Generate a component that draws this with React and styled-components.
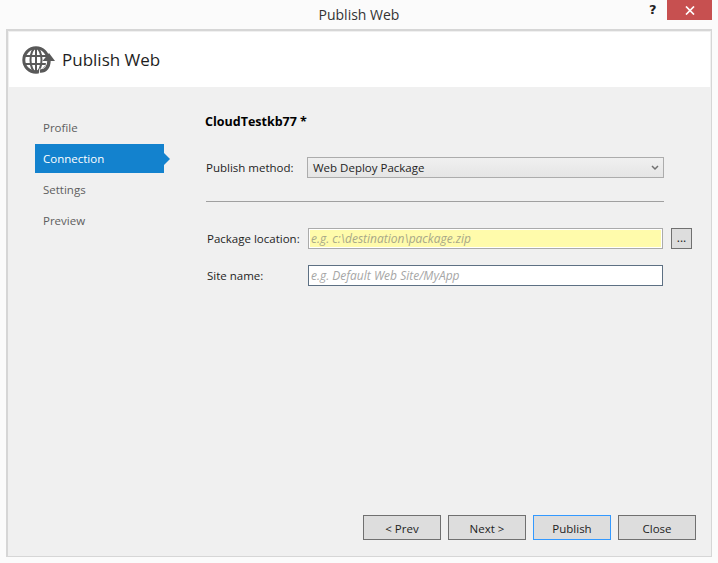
import React from "react";
import styled, { createGlobalStyle } from "styled-components";

const GlobalStyle = createGlobalStyle`
  html, body {
    margin: 0;
    padding: 0;
    background: #fbfbfb;
  }
  body {
    font-family: "Open Sans", "Noto Sans", "Liberation Sans", sans-serif;
    font-size: 11.5px;
    color: #1e1e1e;
  }
`;

const steps = ["Profile", "Connection", "Settings", "Preview"];

const GlobeIcon = () => (
  <svg width="33" height="28" viewBox="0 0 33 28" fill="none" stroke="#595959">
    <circle cx="14" cy="14" r="12.2" strokeWidth="3" />
    <ellipse cx="14" cy="14" rx="5.5" ry="12" strokeWidth="2" />
    <path d="M14 2v24M2.5 10h23M2.5 18h23" strokeWidth="2" />
    <path d="M17 26c7 1 11-4 10.5-11" stroke="#fff" strokeWidth="7" />
    <path d="M18 25c5.5.5 9-4 9-10.5" strokeWidth="3.4" />
    <path d="M20.5 15l6.5-8 6 8z" fill="#595959" stroke="none" />
  </svg>
);

const App = () => {
  return (
    <Window>
      <GlobalStyle />
      <TitleBar>
        <TitleText>Publish Web</TitleText>
        <HelpMark>?</HelpMark>
        <CloseBox>
          <svg width="10" height="9" viewBox="0 0 10 9" stroke="#fff" strokeWidth="1.7">
            <path d="M1 .5l8 8M9 .5l-8 8" />
          </svg>
        </CloseBox>
      </TitleBar>
      <Frame>
        <Header>
          <GlobeIcon />
          <HeaderTitle>Publish Web</HeaderTitle>
        </Header>
        <Body>
          <Sidebar>
            {steps.map((step) => (
              <Step key={step} $active={step === "Connection"}>
                {step}
              </Step>
            ))}
          </Sidebar>
          <Main>
            <Heading>CloudTestkb77 *</Heading>
            <MethodRow>
              <Label $width={101}>Publish method:</Label>
              <Select>
                <span>Web Deploy Package</span>
                <svg width="8" height="6" viewBox="0 0 8 6" fill="none" stroke="#707070" strokeWidth="1.5">
                  <path d="M1 1l3 3 3-3" />
                </svg>
              </Select>
            </MethodRow>
            <Divider />
            <FieldRow $top={26}>
              <Label $width={101} $indent={1}>Package location:</Label>
              <Field $required>e.g. c:\destination\package.zip</Field>
              <BrowseButton>...</BrowseButton>
            </FieldRow>
            <FieldRow $top={16}>
              <Label $width={101} $indent={1}>Site name:</Label>
              <Field>e.g. Default Web Site/MyApp</Field>
            </FieldRow>
            <Footer>
              <Button>&lt; Prev</Button>
              <Button>Next &gt;</Button>
              <Button $primary>Publish</Button>
              <Button>Close</Button>
            </Footer>
          </Main>
        </Body>
      </Frame>
    </Window>
  );
};

const Window = styled.div`
  width: 718px;
  height: 563px;
  overflow: hidden;
  background: #fbfbfb;
`;

const TitleBar = styled.div`
  position: relative;
  height: 29px;
  display: flex;
  align-items: center;
  justify-content: center;
`;

const TitleText = styled.div`
  font-size: 14px;
  color: #333;
`;

const HelpMark = styled.div`
  position: absolute;
  left: 649px;
  top: 0;
  font-family: "DejaVu Sans", sans-serif;
  font-size: 13px;
  font-weight: bold;
  line-height: 20px;
  color: #222;
`;

const CloseBox = styled.div`
  position: absolute;
  left: 667px;
  top: 0;
  width: 45px;
  height: 20px;
  background: #c75050;
  display: flex;
  align-items: center;
  justify-content: center;
`;

const Frame = styled.div`
  box-sizing: border-box;
  width: 706px;
  height: 528px;
  margin-left: 6px;
  padding: 1px;
  border: 2px solid #d6d6d6;
  border-bottom-width: 1px;
  border-right-width: 1px;
  background: #f0f0f0;
  display: flex;
  flex-direction: column;
`;

const Header = styled.div`
  height: 55px;
  flex: none;
  background: #fff;
  display: flex;
  align-items: center;
  padding-left: 13px;
  gap: 7px;
`;

const HeaderTitle = styled.div`
  font-size: 17px;
  color: #1e1e1e;
`;

const Body = styled.div`
  flex: 1;
  display: flex;
  min-height: 0;
`;

const Sidebar = styled.div`
  width: 129px;
  flex: none;
  margin-left: 26px;
  padding-top: 26px;
  display: flex;
  flex-direction: column;
  gap: 2px;
`;

const Step = styled.div`
  position: relative;
  height: 29px;
  line-height: 29px;
  padding-left: 8px;
  font-size: 11.5px;
  color: ${(p) => (p.$active ? "#fff" : "#5e5e5e")};
  background: ${(p) => (p.$active ? "#1382ce" : "transparent")};

  ${(p) =>
    p.$active &&
    `&::after {
      content: "";
      position: absolute;
      left: 100%;
      top: 9px;
      border-left: 6px solid #1382ce;
      border-top: 6px solid transparent;
      border-bottom: 6px solid transparent;
    }`}
`;

const Main = styled.div`
  flex: 1;
  margin-left: 41px;
  padding-top: 25px;
  display: flex;
  flex-direction: column;
  min-width: 0;
`;

const Heading = styled.div`
  font-size: 12.5px;
  font-weight: 700;
  line-height: 19px;
  color: #000;
`;

const MethodRow = styled.div`
  display: flex;
  align-items: center;
  margin: 26px 0 0 1px;
`;

const Label = styled.div`
  box-sizing: border-box;
  width: ${(p) => p.$width + (p.$indent || 0)}px;
  padding-left: ${(p) => p.$indent || 0}px;
  font-size: 11.5px;
  color: #1e1e1e;
  white-space: nowrap;
`;

const Select = styled.div`
  box-sizing: border-box;
  width: 357px;
  height: 21px;
  padding: 0 4px 0 5px;
  border: 1px solid #acacac;
  background: linear-gradient(#f0f0f0, #e5e5e5);
  display: flex;
  align-items: center;
  justify-content: space-between;
  font-size: 11.5px;
  color: #1e1e1e;
`;

const Divider = styled.div`
  width: 458px;
  height: 1px;
  margin: 23px 0 0 1px;
  background: #a0a0a0;
`;

const FieldRow = styled.div`
  display: flex;
  align-items: center;
  margin: ${(p) => p.$top}px 0 0 1px;
`;

const Field = styled.div`
  box-sizing: border-box;
  width: 355px;
  height: 21px;
  line-height: 19px;
  padding-left: 2px;
  border: 1px solid ${(p) => (p.$required ? "#ababab" : "#5d7083")};
  background: ${(p) => (p.$required ? "#fffbab" : "#fff")};
  box-shadow: ${(p) => (p.$required ? "inset 0 0 0 1px #fff" : "none")};
  font-size: 12px;
  font-style: italic;
  color: ${(p) => (p.$required ? "#a8a888" : "#a6a6a6")};
  white-space: nowrap;
`;

const BrowseButton = styled.div`
  box-sizing: border-box;
  width: 21px;
  height: 21px;
  margin-left: 8px;
  border: 1px solid #707070;
  background: #dddddd;
  text-align: center;
  font-size: 12px;
  line-height: 17px;
  color: #1e1e1e;
`;

const Footer = styled.div`
  margin-top: auto;
  margin-bottom: 15px;
  margin-left: 158px;
  display: flex;
  gap: 7px;
`;

const Button = styled.div`
  box-sizing: border-box;
  width: 78px;
  height: 25px;
  padding-top: 1px;
  border: 1px solid ${(p) => (p.$primary ? "#3399ff" : "#707070")};
  background: #dddddd;
  display: flex;
  align-items: center;
  justify-content: center;
  font-size: 11.5px;
  color: #1e1e1e;
`;

export default App;
